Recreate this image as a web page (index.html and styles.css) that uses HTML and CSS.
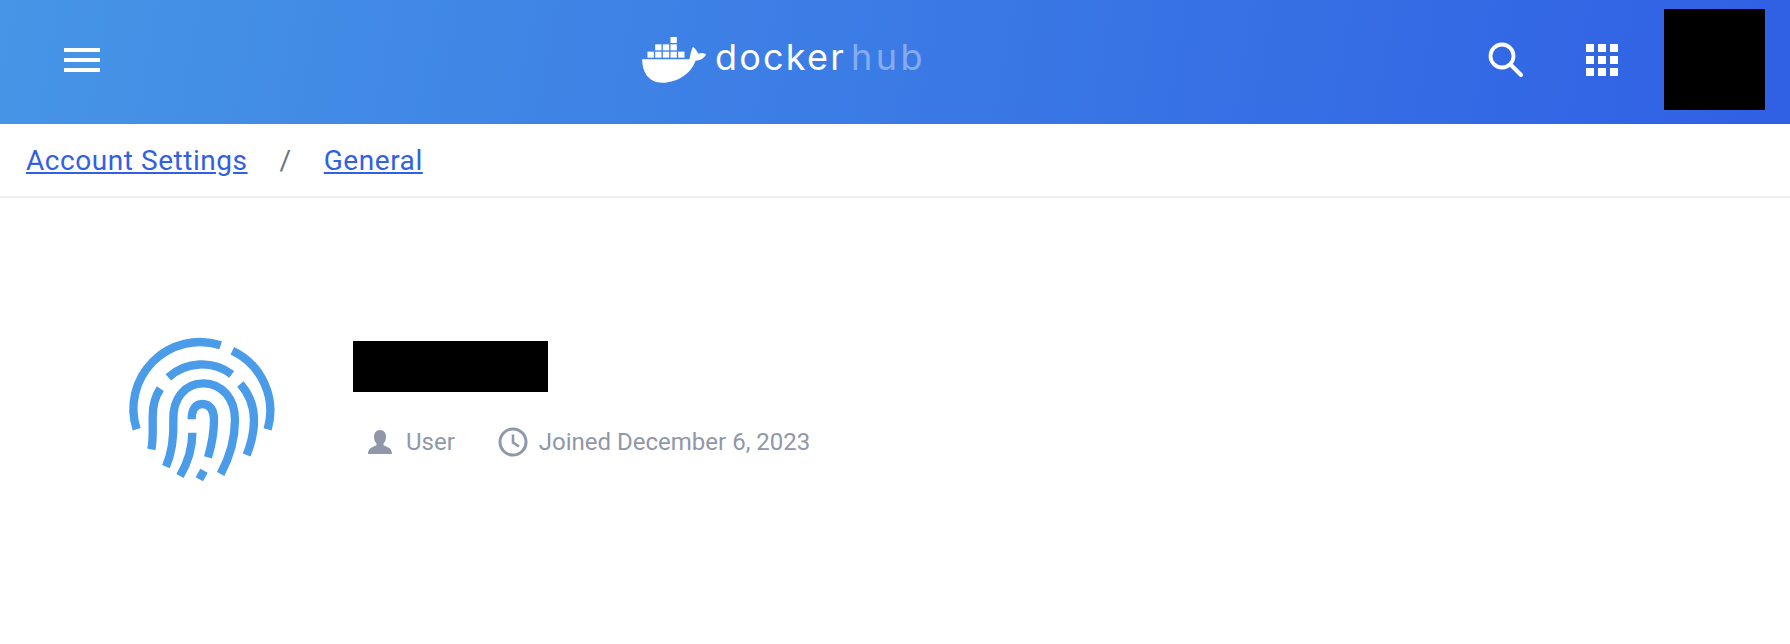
FILE: index.html
```html
<!DOCTYPE html>
<html lang="en">
<head>
    <meta charset="UTF-8">
    <meta name="viewport" content="width=device-width, initial-scale=1.0">
    <title>Account Settings - Docker Hub</title>
    <link rel="stylesheet" href="styles.css">
</head>
<body>
    <header class="topbar">
        <div class="menu-icon"><span></span><span></span><span></span></div>
        <div class="logo">
            <svg class="whale" viewBox="60 45 200 150" width="67" height="50">
                <path fill="#fff" d="M66 118H208C210 104 214 90 218 80C226 86 232 94 234 101C242 98 250 99 258 103C250 118 238 122 226 122C214 160 170 188 126 188C88 188 66 160 66 118Z"/>
                <g fill="#fff">
                    <rect x="82" y="95" width="19" height="18"/><rect x="105" y="95" width="19" height="18"/><rect x="128" y="95" width="19" height="18"/><rect x="151" y="95" width="19" height="18"/><rect x="174" y="95" width="19" height="18"/>
                    <rect x="105" y="73" width="19" height="18"/><rect x="128" y="73" width="19" height="18"/><rect x="151" y="73" width="19" height="18"/>
                    <rect x="151" y="51" width="19" height="18"/>
                </g>
            </svg>
            <span class="logo-text">docker<span class="logo-hub">hub</span></span>
        </div>
        <div class="topbar-right">
            <svg class="search-icon" viewBox="0 0 36 36" width="36" height="36">
                <circle cx="14" cy="14" r="11.5" fill="none" stroke="#fff" stroke-width="3.800"/>
                <path d="M22.5 22.5L33 33" fill="none" stroke="#fff" stroke-width="4" stroke-linecap="round"/>
            </svg>
            <div class="apps-icon">
                <span></span><span></span><span></span>
                <span></span><span></span><span></span>
                <span></span><span></span><span></span>
            </div>
            <div class="avatar"></div>
        </div>
    </header>
    <nav class="breadcrumb">
        <a href="#">Account Settings</a>
        <span class="sep">/</span>
        <a href="#">General</a>
    </nav>
    <main class="profile">
        <svg class="fingerprint" viewBox="0 0 600 510" width="200" height="170">
            <g fill="none" stroke="#4a9be8" stroke-width="25">
                <path d="M110 328A200 200 0 0 1 362 76"/>
                <path d="M397 92A200 200 0 0 1 503 328"/>
                <path d="M205 172A150 150 0 0 1 395 163"/>
                <path d="M181 206C165 230 158 260 158 290C158 330 160 360 154 388"/>
                <path d="M421 192C450 225 462 265 462 300C462 340 452 375 440 405"/>
                <path d="M198 440C215 400 222 360 220 300C218 235 255 190 310 190C365 190 405 235 405 300C405 360 390 410 362 462"/>
                <path d="M275 298C275 270 285 252 307 252C330 252 342 270 342 300C342 340 335 375 324 412"/>
                <path d="M277 338C277 385 262 430 240 468"/>
                <path d="M312 452L298 478"/>
            </g>
        </svg>
        <div class="profile-info">
            <div class="name-block"></div>
            <div class="meta">
                <div class="meta-item">
                    <svg viewBox="0 0 26 26" width="26" height="26">
                        <path fill="#8f97a9" d="M13 1C17 1 19 4 19 8C19 11 18 13 16.500 14.500V16C19 18 25 18 25 25H1C1 18 7 18 9.500 16V14.500C8 13 7 11 7 8C7 4 9 1 13 1Z"/>
                    </svg>
                    <span>User</span>
                </div>
                <div class="meta-item">
                    <svg class="clock-icon" viewBox="0 0 30 30" width="30" height="30">
                        <circle cx="15" cy="15" r="13" fill="none" stroke="#8f97a9" stroke-width="3"/>
                        <path d="M15 7.500V15.500L21 19.500" fill="none" stroke="#8f97a9" stroke-width="2.600"/>
                    </svg>
                    <span>Joined December 6, 2023</span>
                </div>
            </div>
        </div>
    </main>
</body>
</html>
```
FILE: styles.css
```css
body {
    font-family: 'Roboto', sans-serif;
    background-color: #ffffff;
    margin: 0;
}
.topbar {
    display: flex;
    align-items: center;
    height: 124px;
    box-sizing: border-box;
    padding: 0 25px 4px 64px;
    background: linear-gradient(100deg, #4695e6 0%, #3060e4 100%);
}
.menu-icon {
    display: flex;
    flex-direction: column;
    gap: 6px;
    width: 36px;
}
.menu-icon span {
    height: 4px;
    background-color: #fff;
}
.logo {
    display: flex;
    align-items: center;
    gap: 8px;
    margin-left: 540px;
}
.logo-text {
    font-family: 'Inter', sans-serif;
    font-weight: 400;
    font-size: 36px;
    line-height: 44px;
    letter-spacing: 2.2px;
    color: #fff;
    padding-bottom: 6px;
}
.logo-hub {
    margin-left: 5px;
    letter-spacing: 3.5px;
    color: rgba(255, 255, 255, 0.4);
}
.topbar-right {
    display: flex;
    align-self: stretch;
    align-items: center;
    margin-left: auto;
}
.apps-icon {
    display: grid;
    grid-template-columns: repeat(3, 8px);
    grid-auto-rows: 8px;
    gap: 4px;
    margin-left: 62px;
}
.apps-icon span {
    background-color: #fff;
}
.avatar {
    align-self: flex-start;
    width: 101px;
    height: 101px;
    margin-left: 46px;
    margin-top: 9px;
    background-color: #000;
}
.breadcrumb {
    display: flex;
    align-items: center;
    gap: 32px;
    height: 72px;
    padding-left: 26px;
    border-bottom: 2px solid #f0f0f0;
    font-size: 28px;
    letter-spacing: 0.55px;
}
.breadcrumb a {
    color: #3260e3;
}
.breadcrumb .sep {
    color: #6b7280;
}
.profile {
    display: flex;
    padding: 122px 0 0 100px;
}
.fingerprint {
    display: block;
}
.profile-info {
    margin-left: 53px;
    padding-top: 21px;
}
.name-block {
    width: 195px;
    height: 51px;
    background-color: #000;
}
.meta {
    display: flex;
    gap: 43px;
    margin-top: 35px;
    padding-left: 14px;
    font-size: 24px;
    color: #8f97a9;
}
.meta-item {
    display: flex;
    align-items: center;
    gap: 13px;
}
.clock-icon {
    margin-right: -2px;
}
```
